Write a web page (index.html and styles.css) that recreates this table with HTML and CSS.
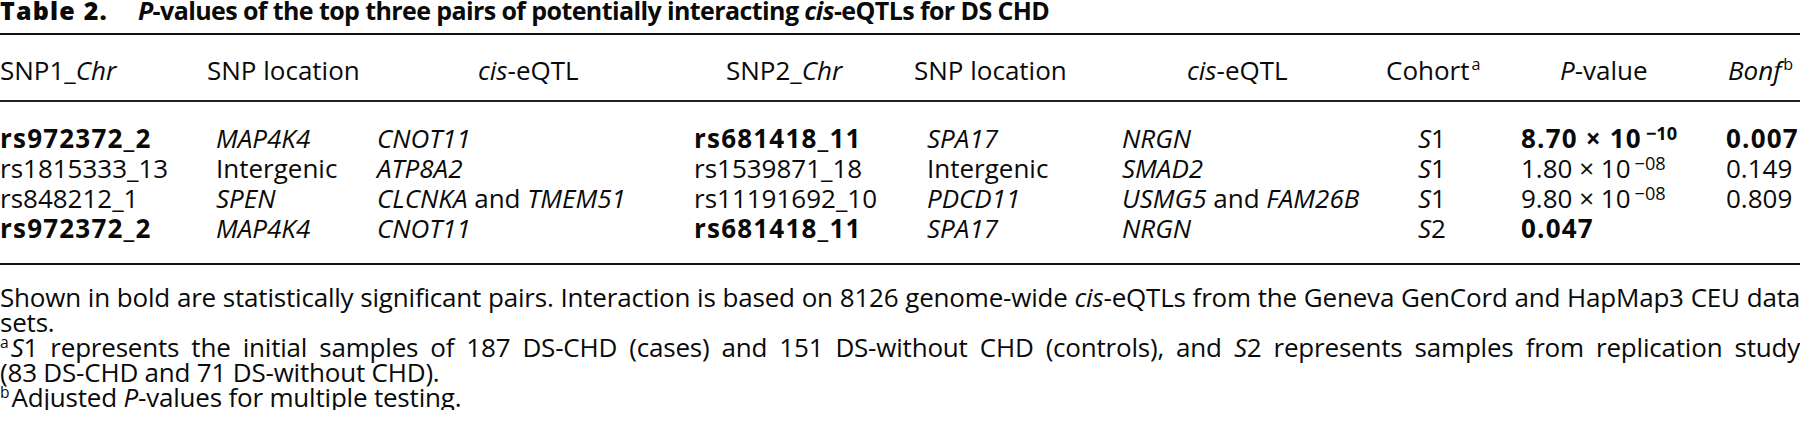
FILE: index.html
```html
<!DOCTYPE html>
<html lang="en">
<head>
<meta charset="utf-8">
<title>Table 2</title>
<link rel="stylesheet" href="styles.css">
</head>
<body>
<div class="doc">
  <h1 class="title"><span class="label">Table 2.</span><span class="caption"><i>P</i>-values of the top three pairs of potentially interacting <i>cis</i>-eQTLs for DS CHD</span></h1>
  <div class="table">
    <div class="row head">
      <div class="cell h1">SNP1_<i>Chr</i></div>
      <div class="cell h2">SNP location</div>
      <div class="cell h3"><i>cis</i>-eQTL</div>
      <div class="cell h4">SNP2_<i>Chr</i></div>
      <div class="cell h5">SNP location</div>
      <div class="cell h6"><i>cis</i>-eQTL</div>
      <div class="cell h7">Cohort<sup>a</sup></div>
      <div class="cell h8"><i>P</i>-value</div>
      <div class="cell h9"><i>Bonf</i><sup>b</sup></div>
    </div>
    <div class="tbody">
      <div class="row">
        <div class="cell b">rs972372_2</div>
        <div class="cell"><i>MAP4K4</i></div>
        <div class="cell"><i>CNOT11</i></div>
        <div class="cell b">rs681418_11</div>
        <div class="cell"><i>SPA17</i></div>
        <div class="cell"><i>NRGN</i></div>
        <div class="cell"><i>S</i>1</div>
        <div class="cell b">8.70 × 10<sup class="exp">−10</sup></div>
        <div class="cell b">0.007</div>
      </div>
      <div class="row">
        <div class="cell">rs1815333_13</div>
        <div class="cell">Intergenic</div>
        <div class="cell"><i>ATP8A2</i></div>
        <div class="cell">rs1539871_18</div>
        <div class="cell">Intergenic</div>
        <div class="cell"><i>SMAD2</i></div>
        <div class="cell"><i>S</i>1</div>
        <div class="cell">1.80 × 10<sup class="exp">−08</sup></div>
        <div class="cell">0.149</div>
      </div>
      <div class="row">
        <div class="cell">rs848212_1</div>
        <div class="cell"><i>SPEN</i></div>
        <div class="cell"><i>CLCNKA</i> and <i>TMEM51</i></div>
        <div class="cell">rs11191692_10</div>
        <div class="cell"><i>PDCD11</i></div>
        <div class="cell"><i>USMG5</i> and <i>FAM26B</i></div>
        <div class="cell"><i>S</i>1</div>
        <div class="cell">9.80 × 10<sup class="exp">−08</sup></div>
        <div class="cell">0.809</div>
      </div>
      <div class="row">
        <div class="cell b">rs972372_2</div>
        <div class="cell"><i>MAP4K4</i></div>
        <div class="cell"><i>CNOT11</i></div>
        <div class="cell b">rs681418_11</div>
        <div class="cell"><i>SPA17</i></div>
        <div class="cell"><i>NRGN</i></div>
        <div class="cell"><i>S</i>2</div>
        <div class="cell b">0.047</div>
        <div class="cell"></div>
      </div>
    </div>
  </div>
  <div class="notes">
    <p><span class="line">Shown in bold are statistically significant pairs. Interaction is based on 8126 genome-wide <i>cis</i>-eQTLs from the Geneva GenCord and HapMap3 CEU data</span>
    <span class="line last">sets.</span></p>
    <p><span class="line"><sup>a</sup><i>S</i>1 represents the initial samples of 187 DS-CHD (cases) and 151 DS-without CHD (controls), and <i>S</i>2 represents samples from replication study</span>
    <span class="line last">(83 DS-CHD and 71 DS-without CHD).</span></p>
    <p><span class="line last"><sup>b</sup>Adjusted <i>P</i>-values for multiple testing.</span></p>
  </div>
</div>
</body>
</html>
```

FILE: styles.css
```css
html, body {
  margin: 0;
  padding: 0;
  background: #ffffff;
}

body {
  font-family: "Open Sans", "Noto Sans", sans-serif;
  color: #0a0a0a;
  width: 1800px;
  overflow: hidden;
}

.doc {
  width: 1800px;
}

.title {
  margin: 0;
  font-size: 25px;
  font-weight: 700;
  line-height: 20px;
  height: 20px;
  white-space: nowrap;
  display: flex;
  gap: 30px;
}

.label {
  font-weight: 800;
  letter-spacing: 1.2px;
}

.caption {
  letter-spacing: -0.6px;
}

.table {
  margin-top: 13px;
  border-top: 2px solid #111;
  border-bottom: 2px solid #111;
  font-size: 26px;
}

.row {
  display: grid;
  grid-template-columns: 216px 161px 317px 233px 195px 296px 103px 205px 74px;
  line-height: 30px;
  height: 30px;
  white-space: nowrap;
}

.head {
  padding: 20px 0 15px;
  border-bottom: 2px solid #222;
}

.head .cell {
  justify-self: start;
}

.h2 { margin-left: -9px; }
.h3 { margin-left: 101px; }
.h4 { margin-left: 32px; }
.h5 { margin-left: -13px; }
.h6 { margin-left: 65px; }
.h7 { margin-left: -32px; }
.h8 { margin-left: 39px; }
.h9 { margin-left: 2px; }

.tbody {
  padding: 21px 0 20px;
}

.b {
  font-weight: 700;
  letter-spacing: 1.2px;
}

sup {
  font-size: 0.62em;
  line-height: 0;
  vertical-align: 0.62em;
  margin-left: 2px;
  letter-spacing: 0;
}

.exp {
  font-size: 0.7em;
  vertical-align: 0.45em;
  margin-left: 4px;
}

.notes {
  padding-top: 20px;
  font-size: 26px;
  line-height: 25px;
  letter-spacing: -0.2px;
}

.notes p {
  margin: 0;
}

.line {
  display: block;
  text-align: justify;
  text-align-last: justify;
  word-spacing: -4px;
}

.line.last {
  text-align: left;
  text-align-last: left;
  word-spacing: 0;
}

.notes sup {
  font-size: 0.6em;
  vertical-align: 0.55em;
  margin-left: 0;
  margin-right: 2px;
}
```
